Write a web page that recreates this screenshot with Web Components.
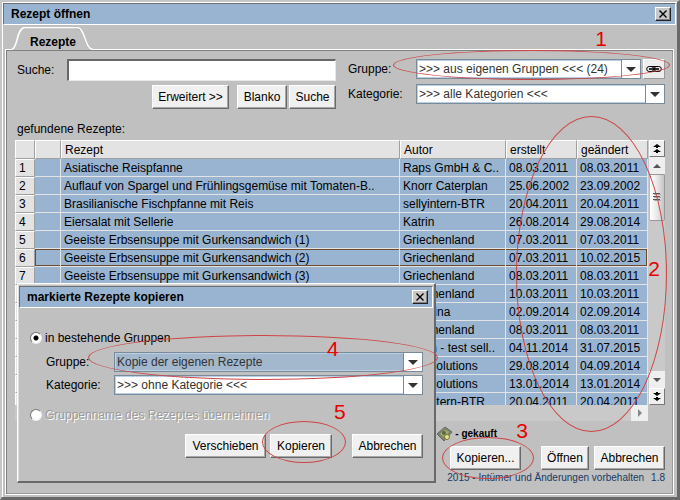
<!DOCTYPE html>
<html lang="de">
<head>
<meta charset="utf-8">
<title>Rezept öffnen</title>
<style>
  html, body { height: 100%; margin: 0; }
  body { background: #c6c6c6; color: #000; font: 12px/14px "Liberation Sans", Arial, sans-serif; }
</style>
</head>
<body>
<recipe-app></recipe-app>
<script>
class Base extends HTMLElement {
  connectedCallback() {
    if (this.shadowRoot) return;
    this.attachShadow({ mode: "open" }).innerHTML = "<style>*{box-sizing:border-box}</style>" + this.view();
  }
}

customElements.define("ui-button", class extends Base {
  view() {
    return `<style>
      :host { display: inline-flex; height: 24px; }
      button { flex: 1; margin: 0; padding: 0 4px; font: inherit; color: #000; background: #f0f0f0; white-space: nowrap;
        border: 1px solid #fff; border-right: 1px solid #696969; border-bottom: 1px solid #696969;
        box-shadow: inset -1px -1px #a8a8a8; }
    </style><button type="button"><slot></slot></button>`;
  }
});

customElements.define("title-bar", class extends Base {
  view() {
    return `<style>
      :host { display: flex; align-items: center; height: 22px; background: #99b4d1; box-sizing: border-box;
        border: 1px solid #fff; border-top-color: #707070; border-left-color: #707070; padding: 0 4px 0 7px; }
      h1 { flex: 1; margin: 0; font-size: 12px; font-weight: bold; }
      button { width: 16px; height: 14px; padding: 0; background: #c8c8c8; display: grid; place-items: center;
        border: 1px solid #fff; border-right-color: #222; border-bottom-color: #222; box-shadow: inset -1px -1px #808080; }
    </style><h1><slot></slot></h1>
    <button type="button" aria-label="Schließen"><svg width="8" height="8"><path d="M0.5 0.5l7 7M7.5 0.5l-7 7" stroke="#000" stroke-width="1.4"/></svg></button>`;
  }
});

customElements.define("combo-box", class extends Base {
  view() {
    const bg = this.hasAttribute("marked") ? "#a3b8cc" : "#fff";
    return `<style>
      :host { display: block; min-width: 0; }
      div { display: grid; height: 20px; }
      select, span { grid-area: 1/1; }
      select { appearance: none; width: 100%; height: 20px; margin: 0; padding: 0 24px 0 2px; font: inherit; color: #333;
        background: ${bg}; border: 1px solid #7a8a99; border-radius: 0; box-shadow: inset 1px 1px #b8cfe5, inset -1px -1px #b8cfe5; }
      span { justify-self: end; width: 20px; pointer-events: none; border: 1px solid #7a8a99; background: #fff; display: grid; place-items: center; }
    </style><div><select aria-label="${this.getAttribute("label")}"><option>${this.getAttribute("value")}</option></select>
    <span><svg width="10" height="5"><path d="M0 0h10L5 5z" fill="#333"/></svg></span></div>`;
  }
});

customElements.define("mark-ring", class extends Base {
  view() {
    return `<style>:host { position: absolute; z-index: 5; box-sizing: border-box; border: 1px solid #cf4545; border-radius: 50%; pointer-events: none; }</style>`;
  }
});

customElements.define("mark-number", class extends Base {
  view() {
    return `<style>:host { position: absolute; z-index: 5; font-size: 21px; line-height: 20px; color: #e60000; pointer-events: none; }</style><slot></slot>`;
  }
});

const soup = "Geeiste Erbsensuppe mit Gurkensandwich ";
const recipes = [
  ["Asiatische Reispfanne", "Raps GmbH &amp; C..", "08.03.2011", "08.03.2011"],
  ["Auflauf von Spargel und Frühlingsgemüse mit Tomaten-B..", "Knorr Caterplan", "25.06.2002", "23.09.2002"],
  ["Brasilianische Fischpfanne mit Reis", "sellyintern-BTR", "20.04.2011", "20.04.2011"],
  ["Eiersalat mit Sellerie", "Katrin", "26.08.2014", "29.08.2014"],
  [soup + "(1)", "Griechenland", "07.03.2011", "07.03.2011"],
  [soup + "(2)", "Griechenland", "07.03.2011", "10.02.2015"],
  [soup + "(3)", "Griechenland", "08.03.2011", "08.03.2011"],
  ["", "Griechenland", "10.03.2011", "10.03.2011"],
  ["", "Christina", "02.09.2014", "02.09.2014"],
  ["", "Griechenland", "08.03.2011", "08.03.2011"],
  ["", "Admin - test sell..", "04.11.2014", "31.07.2015"],
  ["", "BTR solutions", "29.08.2014", "04.09.2014"],
  ["", "BTR solutions", "13.01.2014", "13.01.2014"],
  ["", "sellyintern-BTR", "20.04.2011", "20.04.2011"]
];

customElements.define("recipe-table", class extends Base {
  view() {
    const rows = recipes.map((r, i) => `<tr${i === 5 ? ' class="current"' : ""}><th scope="row">${i + 1}</th><td></td>${r.map(c => `<td>${c}</td>`).join("")}</tr>`).join("");
    return `<style>
      :host { flex: 1; min-height: 0; display: grid; grid-template: minmax(0, 1fr) 16px / minmax(0, 1fr) 17px; }
      .view { overflow: hidden; }
      table { width: 100%; table-layout: fixed; border-collapse: separate; border-spacing: 0; }
      tr { height: 18px; }
      th, td { height: 18px; padding: 0 0 0 3px; text-align: left; font-weight: normal; white-space: nowrap; overflow: hidden; line-height: 16px; }
      th { background: #e3e3e3; border: 1px solid #fff; border-right-color: #a0a0a0; border-bottom-color: #a0a0a0; }
      thead th { height: 19px; }
      td { background: #99b4d1; border-right: 1px solid #e3e3e3; border-bottom: 1px solid #e3e3e3; }
      .current td { box-shadow: inset 0 1px #6b4a2f, inset 0 -1px #6b4a2f; }
      .current td:nth-child(2) { box-shadow: inset 1px 1px #6b4a2f, inset 0 -1px #6b4a2f; }
      .current td:last-child { box-shadow: inset -1px -1px #6b4a2f, inset 0 1px #6b4a2f; }
      .vbar { display: flex; flex-direction: column; background: #c9c9c9; padding-left: 1px; }
      .hbar { display: flex; justify-content: flex-end; background: #c9c9c9; }
      button { display: grid; place-items: center; width: 16px; height: 17px; flex: none; padding: 0; border: 0; background: #efefef; }
      .end { border: 1px solid #fff; border-right-color: #777; border-bottom-color: #777; }
      .thumb { height: 47px; border: 1px solid #999; border-left-color: #bbb; border-radius: 2px; background: linear-gradient(90deg, #fff, #e8e8e8 50%, #c4c4c4); }
      .gap { flex: 1; }
      .hbar button { height: 16px; width: 17px; }
    </style>
    <div class="view"><table>
      <colgroup><col style="width:20px"><col style="width:26px"><col><col style="width:106px"><col style="width:71px"><col style="width:71px"></colgroup>
      <thead><tr><th></th><th></th><th scope="col">Rezept</th><th scope="col">Autor</th><th scope="col">erstellt</th><th scope="col">geändert</th></tr></thead>
      <tbody>${rows}</tbody></table></div>
    <div class="vbar">
      <button class="end" type="button" aria-label="Zum Anfang"><svg width="8" height="9"><path d="M4 0l4 3H5v1H3V3H0zM4 5l4 3H5v1H3V8H0z" fill="#000"/></svg></button>
      <button type="button" aria-label="Nach oben"><svg width="8" height="4"><path d="M0 4L4 0l4 4z" fill="#555"/></svg></button>
      <button class="thumb" type="button" aria-label="Bildlauf"><svg width="8" height="9"><path d="M0 .5h7M0 3.5h7M0 6.5h7" stroke="#555"/><path d="M1 1.5h7M1 4.5h7M1 7.5h7" stroke="#aaa"/></svg></button>
      <div class="gap"></div>
      <button type="button" aria-label="Nach unten"><svg width="8" height="4"><path d="M0 0L4 4l4-4z" fill="#555"/></svg></button>
      <button class="end" type="button" aria-label="Zum Ende"><svg width="8" height="9"><path d="M3 0h2v1h3L4 4 0 1h3zM3 5h2v1h3L4 9 0 6h3z" fill="#000"/></svg></button>
    </div>
    <div class="hbar"><button type="button" aria-label="Nach rechts"><svg width="4" height="8"><path d="M0 0l4 4-4 4z" fill="#888"/></svg></button></div>`;
  }
});

customElements.define("search-form", class extends Base {
  view() {
    return `<style>
      :host { display: grid; grid-template-columns: minmax(0, 1fr) 317px; gap: 12px; padding: 0 0 0 2px; }
      .left { display: grid; grid-template-columns: 50px minmax(0, 1fr); row-gap: 4px; align-content: start; align-items: center; }
      input { height: 22px; width: 100%; padding: 0 3px; font: inherit; background: #fff; border: 1px solid #e8e8e8; border-top: 2px solid #696969; border-left: 2px solid #696969; }
      .buttons { grid-column: 1 / -1; display: flex; justify-content: flex-end; gap: 2px; }
      .wide { width: 77px; margin-right: 6px; } .mid { width: 50px; } .small { width: 47px; }
      .right { display: grid; grid-template-columns: 68px minmax(0, 1fr); row-gap: 5px; align-items: center; align-content: start; }
      .pair { display: grid; grid-template-columns: minmax(0, 1fr) 22px; gap: 2px; }
      .chain { height: 20px; padding: 0; background: #eee; border: 1px solid #fff; border-right-color: #999; border-bottom-color: #999; display: grid; place-items: center; }
    </style>
    <div class="left"><label for="q">Suche:</label><input id="q" type="text">
      <div class="buttons"><ui-button class="wide">Erweitert &gt;&gt;</ui-button><ui-button class="mid">Blanko</ui-button><ui-button class="small">Suche</ui-button></div></div>
    <div class="right"><span>Gruppe:</span>
      <div class="pair"><combo-box label="Gruppe" value="&amp;gt;&amp;gt;&amp;gt; aus eigenen Gruppen &amp;lt;&amp;lt;&amp;lt; (24)"></combo-box>
      <button class="chain" type="button" aria-label="Verknüpfen"><svg width="16" height="8" fill="none" stroke="#000"><rect x=".7" y="1.5" width="7" height="5" rx="2.5"/><rect x="8.3" y="1.5" width="7" height="5" rx="2.5"/><path d="M3 4h10" stroke-width="1.6"/><path d="M5 1.5h6M5 6.5h6"/></svg></button></div>
      <span>Kategorie:</span><combo-box label="Kategorie" value="&amp;gt;&amp;gt;&amp;gt; alle Kategorien &amp;lt;&amp;lt;&amp;lt;"></combo-box></div>`;
  }
});

customElements.define("copy-dialog", class extends Base {
  view() {
    return `<style>
      :host { position: absolute; z-index: 3; left: 15px; top: 281px; width: 419px; box-sizing: border-box; background: #c0c0c0; padding: 2px 1px 23px;
        border: 1px solid #fff; border-right: 2px solid #696969; border-bottom: 2px solid #696969; box-shadow: inset 1px 1px #dcdcdc; }
      form { padding: 22px 10px 0 11px; }
      .radio { display: flex; align-items: center; gap: 3px; height: 16px; }
      input { appearance: none; width: 12px; height: 12px; margin: 0; border-radius: 50%; background: #fff; border: 1px solid #777; border-right-color: #eee; border-bottom-color: #eee; }
      input:checked { background: radial-gradient(circle, #000 2px, #fff 3px); }
      .off { color: #9c9c9c; text-shadow: 1px 1px #fff; }
      .fields { display: grid; grid-template-columns: 68px minmax(0, 1fr); gap: 3px 0; align-items: center; padding: 6px 0 12px 16px; }
      .buttons { display: flex; justify-content: flex-end; gap: 4px; margin-top: 11px; }
      .a { width: 81px; } .b { width: 62px; margin-right: 16px; } .c { width: 71px; }
    </style>
    <title-bar>markierte Rezepte kopieren</title-bar>
    <form><div class="radio"><input id="g" type="radio" name="m" checked><label for="g">in bestehende Gruppen</label></div>
      <div class="fields"><span>Gruppe:</span><combo-box marked label="Gruppe" value="Kopie der eigenen Rezepte"></combo-box>
      <span>Kategorie:</span><combo-box label="Kategorie" value="&amp;gt;&amp;gt;&amp;gt; ohne Kategorie &amp;lt;&amp;lt;&amp;lt;"></combo-box></div>
      <div class="radio off"><input id="n" type="radio" name="m" disabled><label for="n">Gruppenname des Rezeptes übernehmen</label></div>
      <div class="buttons"><ui-button class="a">Verschieben</ui-button><ui-button class="b">Kopieren</ui-button><ui-button class="c">Abbrechen</ui-button></div>
    </form>`;
  }
});

customElements.define("recipe-app", class extends Base {
  view() {
    return `<style>
      :host { position: relative; display: flex; flex-direction: column; height: 100vh; min-height: 440px; box-sizing: border-box; overflow: hidden;
        background: #c0c0c0; border: 2px solid #c6c6c6; border-right: 3px solid #696969; border-bottom: 3px solid #696969;
        padding: 1px 1px 2px 1px; box-shadow: inset 1px 1px #fff; }
      .tabs { display: flex; height: 25px; padding: 2px 0 0 9px; margin-bottom: -1px; z-index: 1; }
      .tab { display: grid; width: 82px; height: 23px; padding: 0; border: 0; background: none; font: bold 12px/14px "Liberation Sans", Arial, sans-serif; }
      .tab > * { grid-area: 1/1; place-self: center; }
      .tab span { margin-top: 7px; }
      main { flex: 1; min-height: 0; display: flex; flex-direction: column; margin: 0 2px 0 2px; padding: 9px 8px 8px 9px; border: 1px solid #fff; box-shadow: inset 1px 1px #808080, inset -1px -1px #999; }
      .found { margin: 13px 0 4px 2px; }
      .legend { display: flex; justify-content: flex-end; align-items: center; gap: 2px; height: 25px; padding-right: 168px; font-size: 10px; font-weight: bold; }
      .actions { display: flex; justify-content: flex-end; gap: 5px; }
      .copy { width: 71px; margin-right: 15px; } .open { width: 48px; } .cancel { width: 71px; }
      footer { display: flex; justify-content: flex-end; gap: 7px; font-size: 10px; line-height: 16px; color: #173a66; }
    </style>
    <title-bar>Rezept öffnen</title-bar>
    <div class="tabs"><button class="tab" type="button"><svg width="82" height="23" fill="none"><path d="M0 22.5C6 22 4 3 12 .5H66C74 3 72 21 81 22.5V23H0z" fill="#c0c0c0"/><path d="M66 1.5C74 4 72 20 79 22" stroke="#888"/><path d="M0 22C6 21 4 3 12 .5H66C74 3 72 21 81 22.5" stroke="#fff" stroke-width="1.5"/></svg><span>Rezepte</span></button></div>
    <main>
      <search-form></search-form>
      <div class="found">gefundene Rezepte:</div>
      <recipe-table></recipe-table>
      <div class="legend"><svg width="17" height="16"><path d="M1 8L9 1l7 5-8 9z" fill="#7d8763" stroke="#666" stroke-width="1"/><path d="M4 8l5-4 4 2-5 5z" fill="#a3ac7e"/><circle cx="8" cy="7" r="2" fill="#5d6842"/><circle cx="11" cy="11" r="2.5" fill="#e8e48c" stroke="#777a35"/></svg><span>- gekauft</span></div>
      <div class="actions"><ui-button class="copy">Kopieren...</ui-button><ui-button class="open">Öffnen</ui-button><ui-button class="cancel">Abbrechen</ui-button></div>
      <footer><span>2015 - Intümer und Änderungen vorbehalten</span><span>1.8</span></footer>
    </main>
    <copy-dialog></copy-dialog>
    <mark-ring style="right:7px;top:48px;width:277px;height:30px"></mark-ring><mark-number style="right:70px;top:27px">1</mark-number>
    <mark-ring style="right:10px;top:114px;width:151px;height:316px"></mark-ring><mark-number style="right:17px;top:257px">2</mark-number>
    <mark-ring style="right:143px;bottom:18px;width:92px;height:42px"></mark-ring><mark-number style="right:149px;bottom:56px">3</mark-number>
    <mark-ring style="left:86px;top:333px;width:350px;height:45px"></mark-ring><mark-number style="left:325px;top:337px">4</mark-number>
    <mark-ring style="left:260px;top:419px;width:84px;height:42px"></mark-ring><mark-number style="left:332px;top:400px">5</mark-number>`;
  }
});
</script>
</body>
</html>
